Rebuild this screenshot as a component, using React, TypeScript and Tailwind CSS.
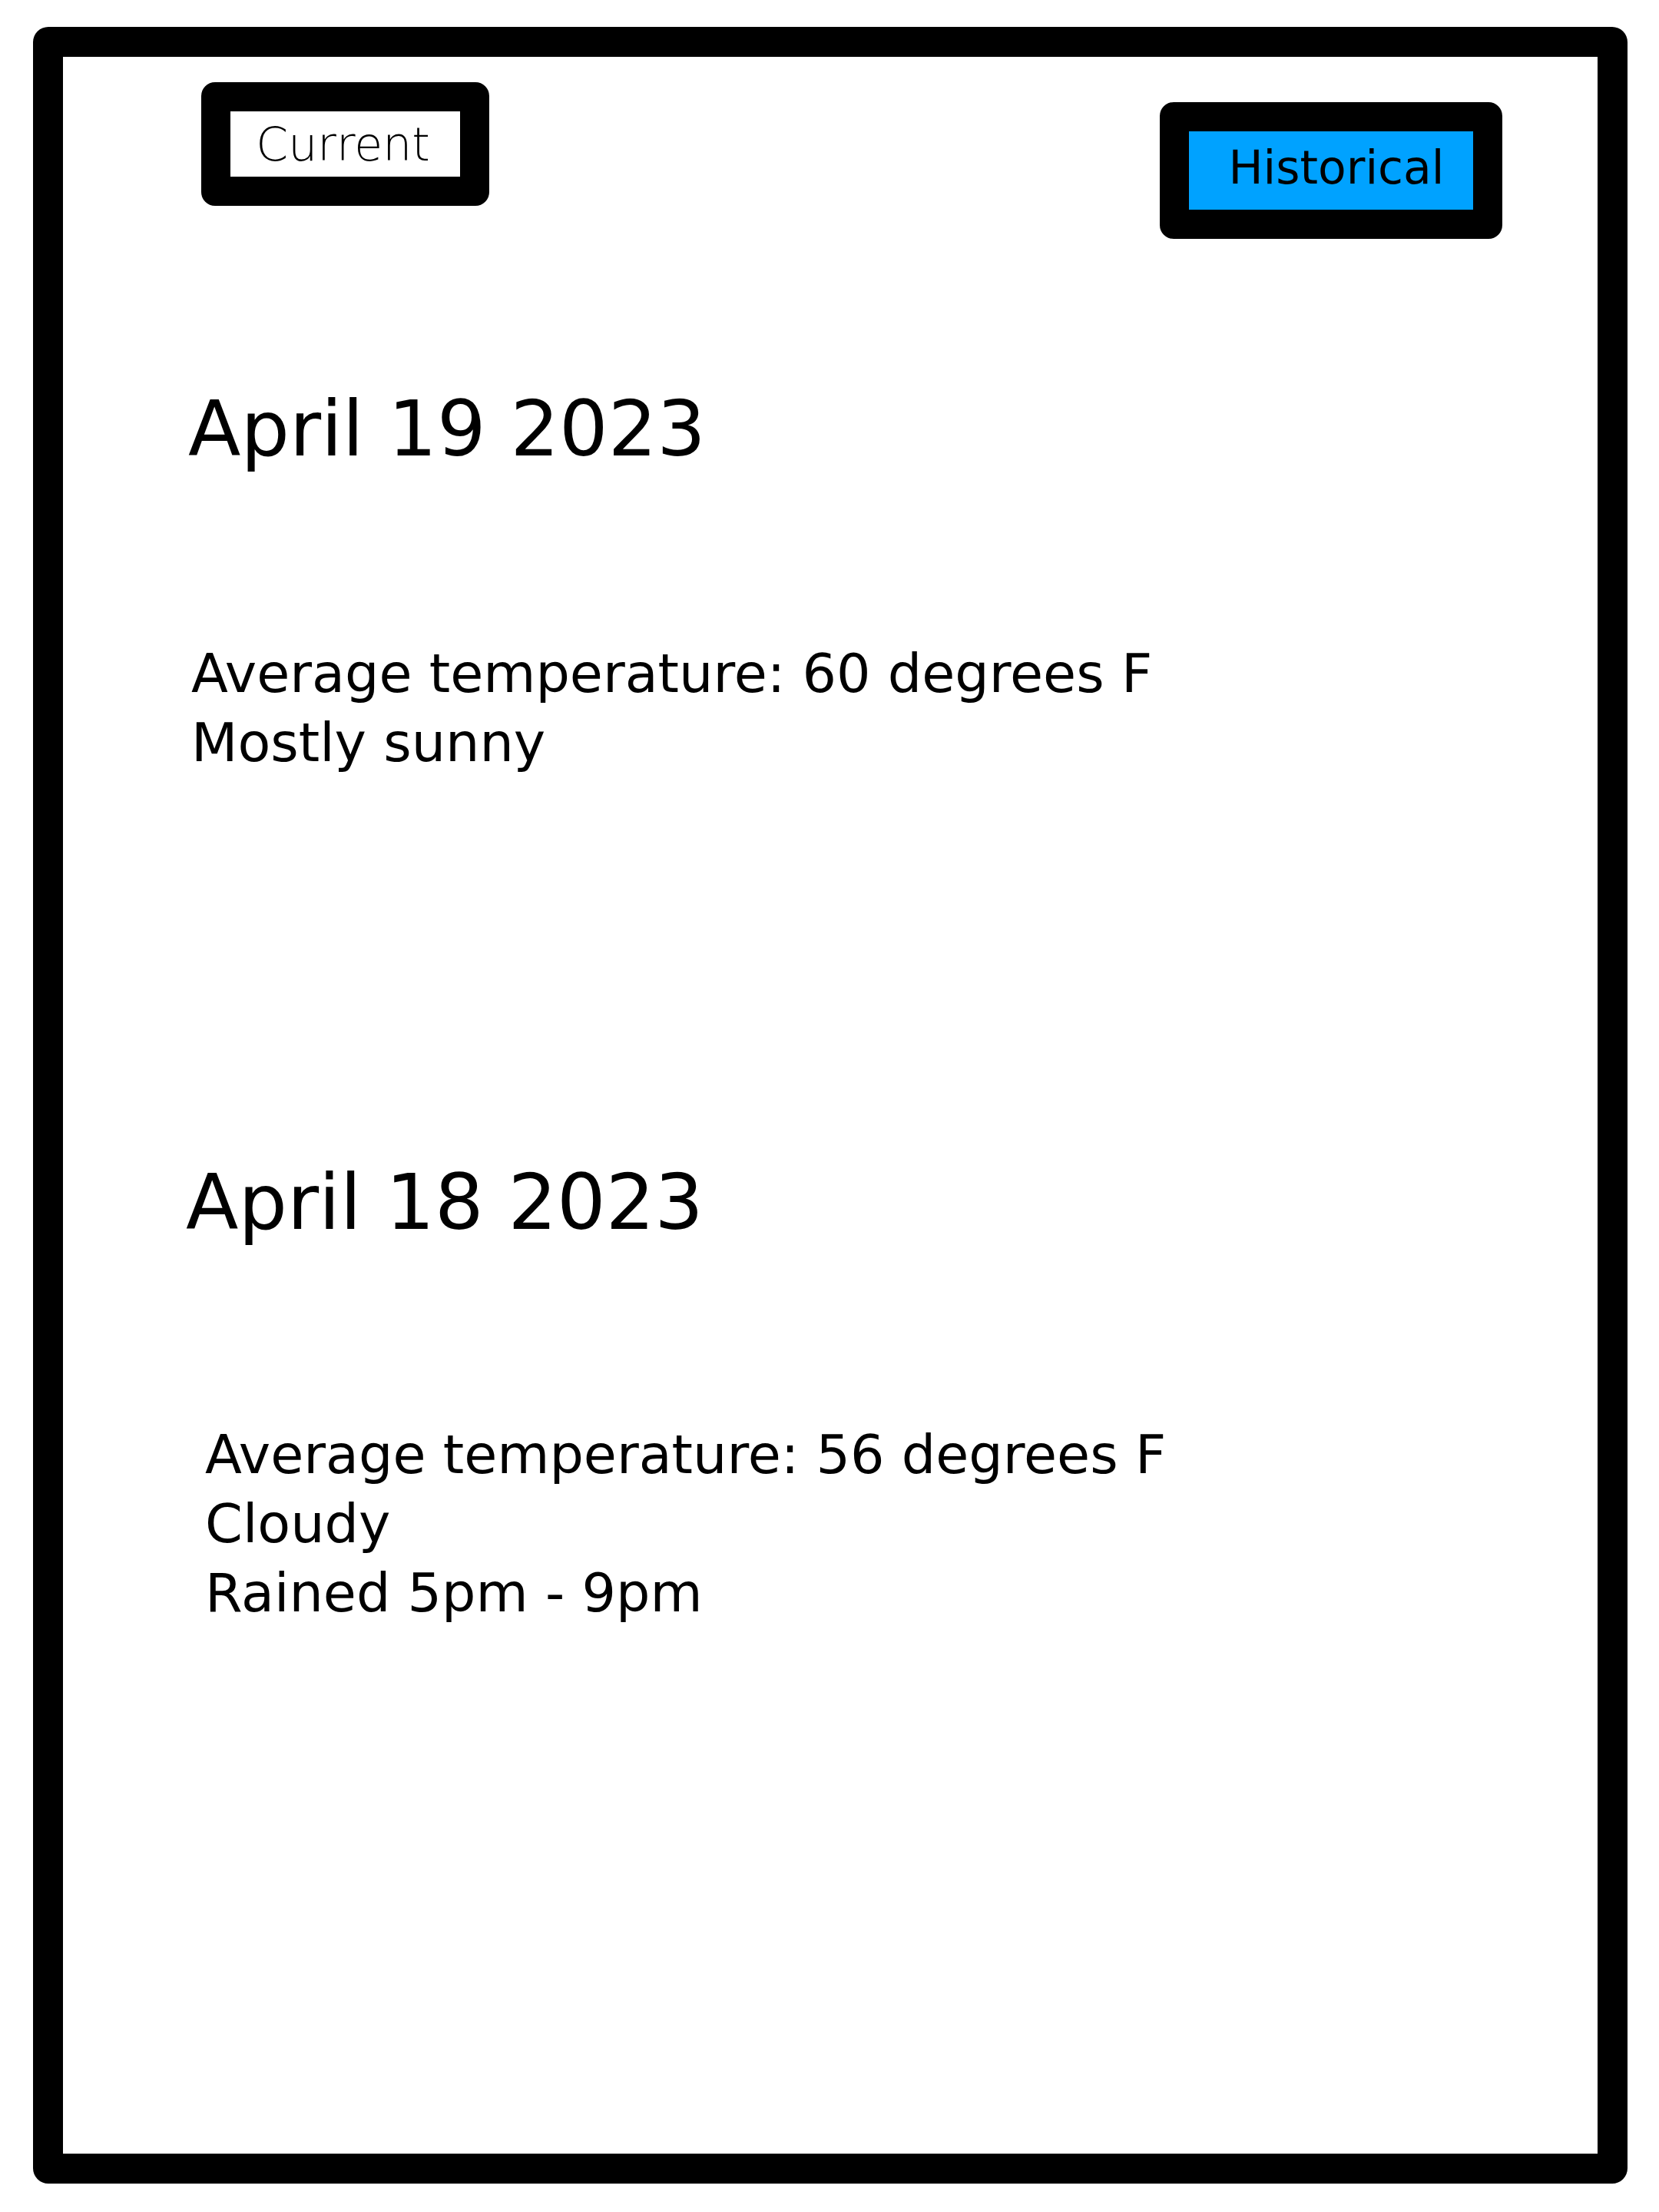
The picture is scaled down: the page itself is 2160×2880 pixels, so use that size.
export default function App() {
  return (
    <div className="bg-white w-[2160px] h-[2880px] pt-[35px] pl-[43px] font-['DejaVu_Sans',sans-serif] text-black">
      <section className="w-[2076px] h-[2808px] border-[39px] border-black rounded-[20px] flex flex-col">
        <div className="flex justify-between items-start">
          <button className="ml-[180px] mt-[33px] w-[375px] h-[161px] border-[38px] border-black rounded-[18px] bg-white flex items-center justify-center">
            <span className="text-[60px] leading-none font-extralight pl-[2px] pr-[8px]">Current</span>
          </button>
          <button className="mr-[124px] mt-[59px] w-[446px] h-[178px] border-[38px] border-black rounded-[18px] bg-[#00a2ff] flex items-center justify-center">
            <span className="text-[60px] leading-none pl-[14px] pb-[8px]">Historical</span>
          </button>
        </div>

        <h2 className="ml-[163px] mt-[198px] text-[100px] leading-[100px]">April 19 2023</h2>
        <div className="ml-[167px] mt-[223px] text-[70px] leading-[90px]">
          <p>Average temperature: 60 degrees F</p>
          <p>Mostly sunny</p>
        </div>

        <h2 className="ml-[160px] mt-[504px] text-[100px] leading-[100px]">April 18 2023</h2>
        <div className="ml-[185px] mt-[233px] text-[70px] leading-[90px]">
          <p>Average temperature: 56 degrees F</p>
          <p>Cloudy</p>
          <p>Rained 5pm - 9pm</p>
        </div>
      </section>
    </div>
  );
}
